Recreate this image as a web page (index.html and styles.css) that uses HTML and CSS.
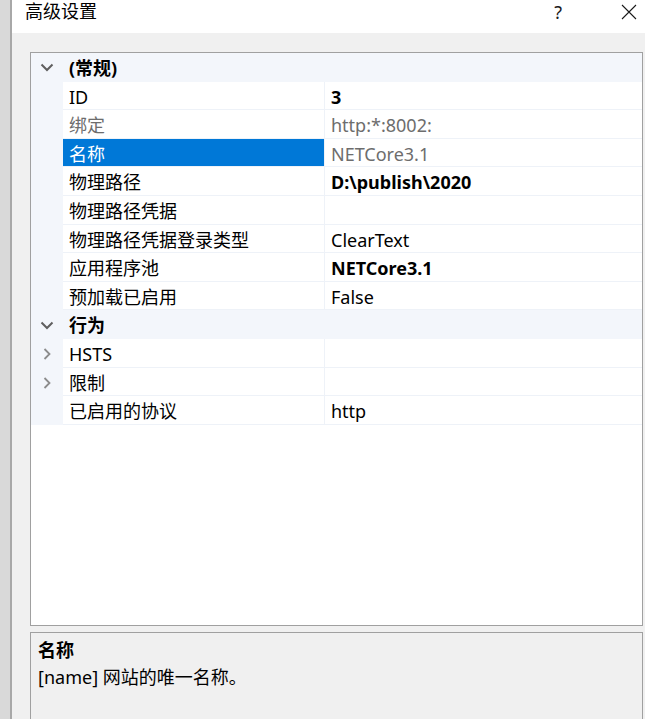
FILE: index.html
```html
<!DOCTYPE html>
<html lang="zh-CN">
<head>
<meta charset="utf-8">
<title>高级设置</title>
<link rel="stylesheet" href="styles.css">
</head>
<body>
<div class="window">
  <div class="frame"></div>
  <div class="dialog">
    <div class="titlebar">
      <span class="title">高级设置</span>
      <span class="help">?</span>
      <svg class="close" width="16" height="16" viewBox="0 0 16 16"><path d="M1 1 L15 15 M15 1 L1 15" stroke="#1a1a1a" stroke-width="1.1" fill="none"/></svg>
    </div>
    <div class="content">
      <div class="grid">
        <div class="row cat">
          <div class="gutter"><svg class="chev-down" width="14" height="9" viewBox="0 0 14 9"><path d="M1.5 1.5 L7 7 L12.5 1.5" stroke="#5f5f5f" stroke-width="2" fill="none"/></svg></div>
          <div class="name bold">(常规)</div>
        </div>
        <div class="row">
          <div class="gutter"></div>
          <div class="name">ID</div>
          <div class="value bold">3</div>
        </div>
        <div class="row">
          <div class="gutter"></div>
          <div class="name muted">绑定</div>
          <div class="value muted">http:*:8002:</div>
        </div>
        <div class="row">
          <div class="gutter"></div>
          <div class="name selected">名称</div>
          <div class="value muted">NETCore3.1</div>
        </div>
        <div class="row">
          <div class="gutter"></div>
          <div class="name">物理路径</div>
          <div class="value bold">D:\publish\2020</div>
        </div>
        <div class="row">
          <div class="gutter"></div>
          <div class="name">物理路径凭据</div>
          <div class="value"></div>
        </div>
        <div class="row">
          <div class="gutter"></div>
          <div class="name">物理路径凭据登录类型</div>
          <div class="value">ClearText</div>
        </div>
        <div class="row">
          <div class="gutter"></div>
          <div class="name">应用程序池</div>
          <div class="value bold">NETCore3.1</div>
        </div>
        <div class="row">
          <div class="gutter"></div>
          <div class="name">预加载已启用</div>
          <div class="value">False</div>
        </div>
        <div class="row cat">
          <div class="gutter"><svg class="chev-down" width="14" height="9" viewBox="0 0 14 9"><path d="M1.5 1.5 L7 7 L12.5 1.5" stroke="#5f5f5f" stroke-width="2" fill="none"/></svg></div>
          <div class="name bold">行为</div>
        </div>
        <div class="row">
          <div class="gutter"><svg class="chev-right" width="9" height="12" viewBox="0 0 9 12"><path d="M1.5 1 L6.5 6 L1.5 11" stroke="#8c8c8c" stroke-width="1.8" fill="none"/></svg></div>
          <div class="name">HSTS</div>
          <div class="value"></div>
        </div>
        <div class="row">
          <div class="gutter"><svg class="chev-right" width="9" height="12" viewBox="0 0 9 12"><path d="M1.5 1 L6.5 6 L1.5 11" stroke="#8c8c8c" stroke-width="1.8" fill="none"/></svg></div>
          <div class="name">限制</div>
          <div class="value"></div>
        </div>
        <div class="row">
          <div class="gutter"></div>
          <div class="name">已启用的协议</div>
          <div class="value">http</div>
        </div>
      </div>
      <div class="desc">
        <div class="desc-title">名称</div>
        <div class="desc-text">[name] 网站的唯一名称。</div>
      </div>
    </div>
  </div>
</div>
</body>
</html>
```
FILE: styles.css
```css
html, body {
  margin: 0;
  padding: 0;
}
body {
  width: 645px;
  height: 719px;
  overflow: hidden;
  background: #f0f0f0;
  font-family: "Noto Sans", "Noto Sans CJK SC", sans-serif;
  font-size: 18px;
  color: #000;
}
.window {
  display: flex;
  height: 719px;
}
.frame {
  width: 10px;
  background: #d9d9d9;
  border-right: 2px solid #a8a8a8;
  flex: none;
}
.dialog {
  flex: 1;
  min-width: 0;
  display: flex;
  flex-direction: column;
  background: #f0f0f0;
}
.titlebar {
  height: 33px;
  flex: none;
  background: #fff;
  display: flex;
  align-items: flex-start;
}
.title {
  margin-left: 13px;
  line-height: 22px;
  font-size: 18px;
}
.help {
  margin-left: auto;
  margin-right: 59px;
  line-height: 24px;
  font-size: 18px;
  color: #1a1a1a;
}
.close {
  margin-top: 4px;
  margin-right: 8px;
}
.content {
  flex: 1;
  min-height: 0;
  display: flex;
  flex-direction: column;
  padding: 19px 2px 0 18px;
}
.grid {
  height: 574px;
  flex: none;
  box-sizing: border-box;
  border: 1px solid #a0a0a0;
  background: #fff;
  overflow: hidden;
}
.row {
  display: grid;
  grid-template-columns: 32px 261px 1fr;
  height: 28.6px;
  line-height: 26px;
}
.gutter {
  background: #f3f6fb;
  display: flex;
  align-items: center;
}
.name, .value {
  box-sizing: border-box;
  border-bottom: 1px solid #eef2f8;
  padding-left: 6px;
  padding-top: 2px;
  white-space: nowrap;
  overflow: hidden;
}
.value {
  border-left: 1px solid #eef2f8;
}
.cat {
  background: #f3f6fb;
}
.cat .name {
  border-bottom: none;
}
.bold {
  font-weight: 700;
}
.muted {
  color: #6d6d6d;
}
.selected {
  background: #0078d7;
  color: #fff;
}
.chev-down {
  margin-left: 9px;
  margin-top: 1px;
}
.chev-right {
  margin-left: 12px;
  margin-top: 2px;
}
.desc {
  margin-top: 6px;
  flex: 1;
  border: 1px solid #a0a0a0;
  border-bottom: none;
  padding: 4px 7px 0;
  line-height: 27px;
}
.desc-title {
  font-weight: 700;
}
```
